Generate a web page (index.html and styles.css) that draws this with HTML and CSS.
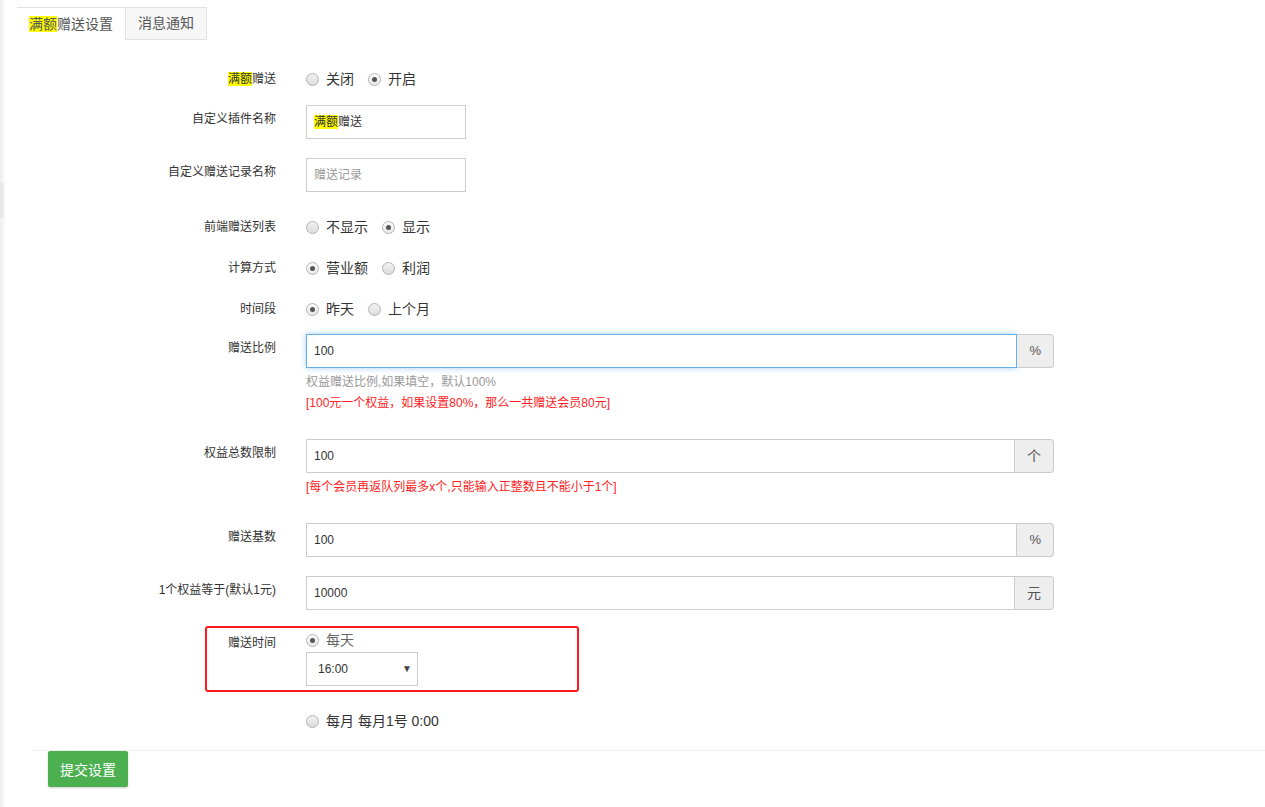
FILE: index.html
```html
<!DOCTYPE html>
<html lang="zh-CN">
<head>
<meta charset="utf-8">
<title>满额赠送设置</title>
<link rel="stylesheet" href="styles.css">
</head>
<body>
<div class="edge"><div class="edge-mark"></div></div>
<div class="main">
  <div class="tabs">
    <div class="tab active"><span class="hl">满额</span>赠送设置</div>
    <div class="tab">消息通知</div>
  </div>

  <div class="form">
    <div class="row radio-row r1">
      <div class="label"><span class="hl">满额</span>赠送</div>
      <div class="control radios">
        <label class="radio"><span class="dot"></span>关闭</label>
        <label class="radio"><span class="dot on"></span>开启</label>
      </div>
    </div>

    <div class="row input-row r2">
      <div class="label">自定义插件名称</div>
      <div class="control"><div class="input small"><span class="hl">满额</span>赠送</div></div>
    </div>

    <div class="row input-row r3">
      <div class="label">自定义赠送记录名称</div>
      <div class="control"><div class="input small placeholder">赠送记录</div></div>
    </div>

    <div class="row radio-row r4">
      <div class="label">前端赠送列表</div>
      <div class="control radios">
        <label class="radio"><span class="dot"></span>不显示</label>
        <label class="radio"><span class="dot on"></span>显示</label>
      </div>
    </div>

    <div class="row radio-row r5">
      <div class="label">计算方式</div>
      <div class="control radios">
        <label class="radio"><span class="dot on"></span>营业额</label>
        <label class="radio"><span class="dot"></span>利润</label>
      </div>
    </div>

    <div class="row radio-row r6">
      <div class="label">时间段</div>
      <div class="control radios">
        <label class="radio"><span class="dot on"></span>昨天</label>
        <label class="radio"><span class="dot"></span>上个月</label>
      </div>
    </div>

    <div class="row input-row r7">
      <div class="label">赠送比例</div>
      <div class="control">
        <div class="group">
          <div class="input wide focus">100</div>
          <div class="addon">%</div>
        </div>
        <div class="help gray first">权益赠送比例,如果填空，默认100%</div>
        <div class="help red">[100元一个权益，如果设置80%，那么一共赠送会员80元]</div>
      </div>
    </div>

    <div class="row input-row r8">
      <div class="label">权益总数限制</div>
      <div class="control">
        <div class="group">
          <div class="input wide">100</div>
          <div class="addon cjk">个</div>
        </div>
        <div class="help red first2">[每个会员再返队列最多x个,只能输入正整数且不能小于1个]</div>
      </div>
    </div>

    <div class="row input-row r9">
      <div class="label">赠送基数</div>
      <div class="control">
        <div class="group">
          <div class="input wide">100</div>
          <div class="addon">%</div>
        </div>
      </div>
    </div>

    <div class="row input-row r10">
      <div class="label">1个权益等于(默认1元)</div>
      <div class="control">
        <div class="group">
          <div class="input wide">10000</div>
          <div class="addon cjk">元</div>
        </div>
      </div>
    </div>

    <div class="row r11">
      <div class="redbox"></div>
      <div class="label time-label">赠送时间</div>
      <div class="control">
        <label class="radio day"><span class="dot on"></span>每天</label>
        <div class="select">16:00<span class="caret">▼</span></div>
      </div>
    </div>

    <div class="row radio-row r12">
      <div class="label"></div>
      <div class="control radios">
        <label class="radio"><span class="dot"></span>每月 每月1号 0:00</label>
      </div>
    </div>
  </div>

  <div class="divider"></div>
  <button class="submit">提交设置</button>
</div>
</body>
</html>
```

FILE: styles.css
```css
html, body {
  margin: 0;
  padding: 0;
  background: #fff;
}
body {
  display: flex;
  min-height: 807px;
  font-family: "Liberation Sans", "Noto Sans CJK SC", sans-serif;
  font-size: 12px;
  color: #333;
}
.edge {
  width: 6px;
  flex: none;
  background: linear-gradient(to right, #ededed, #f7f7f7 60%, #fff);
  position: relative;
}
.edge-mark {
  margin-top: 183px;
  height: 35px;
  width: 4px;
  background: #e9e9e9;
}
.main {
  flex: 1;
  padding-top: 7px;
}
.hl {
  background: #ffff00;
}

/* tabs */
.tabs {
  display: flex;
  margin-left: 11px;
  height: 33px;
}
.tab {
  font-size: 14px;
  line-height: 32px;
  padding: 0 12px 0 12px;
  color: #555;
  border-top: 1px solid #e3e3e3;
}
.tab.active {
  background: #fff;
  color: #555;
}
.tab + .tab {
  background: #f7f7f7;
  border: 1px solid #e3e3e3;
  padding: 0 12px 0 12px;
  line-height: 31px;
}

/* form */
.form {
  margin-top: 29px;
}
.row {
  display: flex;
  position: relative;
}
.label {
  width: 270px;
  flex: none;
  text-align: right;
  line-height: 20px;
  color: #333;
}
.control {
  margin-left: 30px;
  flex: none;
}
.radio-row .label,
.radio-row .control {
  height: 20px;
}
.input-row .label {
  padding-top: 4px;
}
.radios {
  display: flex;
  gap: 14px;
}
.radio {
  display: flex;
  align-items: center;
  font-size: 14px;
  line-height: 20px;
  color: #333;
}
.dot {
  width: 11px;
  height: 11px;
  border: 1px solid #b4b4b4;
  border-radius: 50%;
  background: linear-gradient(#f2f2f2, #dcdcdc);
  margin-right: 7px;
  position: relative;
  box-sizing: content-box;
}
.dot.on {
  background: linear-gradient(#fafafa, #e8e8e8);
}
.dot.on::after {
  content: "";
  position: absolute;
  left: 3px;
  top: 3px;
  width: 5px;
  height: 5px;
  border-radius: 50%;
  background: #555;
}

.input {
  box-sizing: border-box;
  height: 34px;
  border: 1px solid #ccc;
  padding: 0 7px;
  line-height: 32px;
  font-size: 12px;
  color: #333;
  background: #fff;
}
.input.small {
  width: 160px;
}
.input.placeholder {
  color: #999;
}
.group {
  display: flex;
  width: 748px;
}
.input.wide {
  flex: 1;
}
.input.focus {
  border-color: #66afe9;
  box-shadow: 0 0 6px rgba(102, 175, 233, 0.6);
}
.addon {
  box-sizing: border-box;
  height: 34px;
  line-height: 32px;
  padding: 0 12px;
  border: 1px solid #ccc;
  border-left: 0;
  border-radius: 0 4px 4px 0;
  background: #eee;
  color: #555;
  font-size: 13px;
  text-align: center;
}
.addon.cjk {
  font-size: 14px;
}
.help {
  line-height: 21px;
  font-size: 12px;
}
.help.gray {
  color: #999;
}
.help.red {
  color: #f22;
}
.help.first {
  margin-top: 4px;
}
.help.first2 {
  margin-top: 4px;
}

/* row spacing */
.r2 { margin-top: 16px; }
.r3 { margin-top: 19px; }
.r4 { margin-top: 25px; }
.r5 { margin-top: 21px; }
.r6 { margin-top: 21px; }
.r7 { margin-top: 15px; }
.r8 { margin-top: 25px; }
.r9 { margin-top: 25px; }
.r10 { margin-top: 19px; }
.r11 { margin-top: 20px; }
.r12 { margin-top: 25px; }

.time-label {
  padding-top: 3px;
}
.radio.day {
  color: #666;
  height: 20px;
}
.select {
  margin-top: 2px;
  box-sizing: border-box;
  width: 112px;
  height: 34px;
  border: 1px solid #ccc;
  padding: 0 11px;
  line-height: 32px;
  font-size: 12px;
  color: #333;
  display: flex;
  justify-content: space-between;
  align-items: center;
}
.caret {
  font-size: 10px;
  color: #444;
  margin-right: -6px;
}
.redbox {
  position: absolute;
  left: 199px;
  top: -4px;
  width: 374px;
  height: 66px;
  border: 2px solid #ff1a1a;
  border-radius: 3px;
  box-sizing: border-box;
}

.divider {
  margin-top: 19px;
  margin-left: 26px;
  height: 1px;
  background: #eee;
}
.submit {
  display: block;
  margin-left: 42px;
  margin-top: 0;
  height: 36px;
  width: 80px;
  border: 0;
  border-radius: 2px;
  background: #4caf50;
  color: #fff;
  font-family: "Liberation Sans", "Noto Sans CJK SC", sans-serif;
  font-size: 14px;
  box-shadow: 0 1px 2px rgba(0, 0, 0, 0.2);
  padding: 0;
}
```
